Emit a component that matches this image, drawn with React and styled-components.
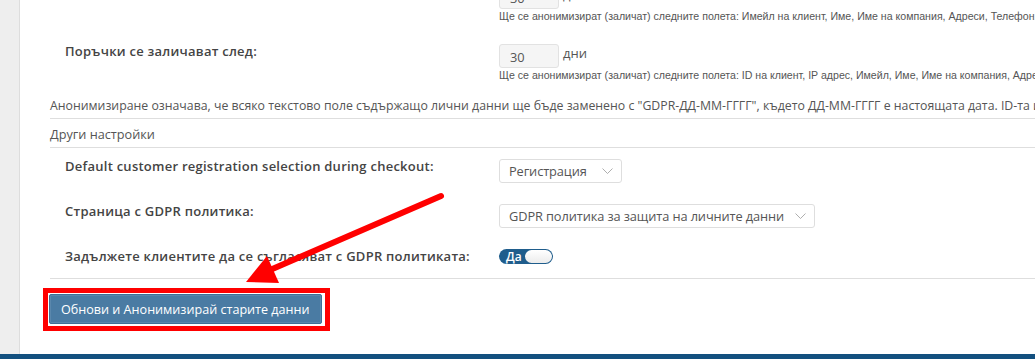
import React from 'react';
import styled, {createGlobalStyle} from 'styled-components';

const GlobalStyle = createGlobalStyle`
  html, body {
    margin: 0;
    padding: 0;
    background: #fff;
  }
  body {
    font-family: "Open Sans", "Noto Sans", sans-serif;
    font-size: 12.7px;
    color: #555;
  }
`;

const Page = styled.div`
  position: relative;
  display: flex;
  flex-direction: column;
  width: 1035px;
  height: 359px;
  overflow: hidden;
`;

const Workspace = styled.div`
  display: flex;
  flex-direction: row;
  height: 354px;
  overflow: hidden;
`;

const Sidebar = styled.div`
  width: 19px;
  flex: none;
  background-color: #eeeeee;
  border-right: 1px solid #dddddd;
`;

const Main = styled.div`
  flex: 1;
  min-width: 0;
  overflow: hidden;
  background-color: #fff;
  padding-left: 30px;
`;

const Scrolled = styled.div`
  margin-top: -15px;
`;

const Row = styled.div`
  display: flex;
  flex-direction: row;
  align-items: flex-start;
  padding: ${props => props.$padding || '0'};
  padding-left: 15px;
  margin-top: ${props => props.$gap || '0'};
`;

const Label = styled.div`
  width: 434px;
  flex: none;
  font-weight: 600;
  font-size: 13px;
  line-height: 14px;
  letter-spacing: 0.25px;
  color: #444;
  white-space: nowrap;
`;

const Field = styled.div`
  display: flex;
  flex-direction: column;
  min-width: 0;
`;

const InputLine = styled.div`
  display: flex;
  flex-direction: row;
  align-items: flex-start;
`;

const NumberInput = styled.div`
  box-sizing: border-box;
  width: 60px;
  height: 24px;
  padding: 0 10px;
  line-height: 24px;
  font-size: 12.8px;
  color: #555;
  background-color: #f5f5f5;
  border: 1px solid #e2e2e2;
  border-radius: 3px;
`;

const Suffix = styled.span`
  margin-left: 4px;
  line-height: 18px;
  font-size: 13px;
  color: #555;
`;

const Help = styled.div`
  margin-top: 1px;
  font-family: "Liberation Sans", Arial, sans-serif;
  font-size: 10.6px;
  line-height: 13px;
  color: #555;
  white-space: nowrap;
`;

const Note = styled.p`
  margin: 15px 0 3px;
  font-size: 12.3px;
  line-height: 18px;
  white-space: nowrap;
`;

const Rule = styled.div`
  height: 1px;
  background-color: #dedede;
`;

const Legend = styled.div`
  padding: 6px 0 4px;
  line-height: 18px;
  color: #555;
`;

const Select = styled.div`
  box-sizing: border-box;
  display: flex;
  flex-direction: row;
  align-items: center;
  justify-content: space-between;
  width: ${props => props.$width}px;
  height: 24px;
  padding: 0 8px 0 9px;
  font-size: 12.8px;
  letter-spacing: -0.1px;
  color: #555;
  background: #fff;
  border: 1px solid #dedede;
  border-radius: 3px;
  white-space: nowrap;
`;

const Chevron = () => (
  <svg width="11" height="6" viewBox="0 0 11 6">
    <path d="M0.5 0.5 L5.5 5.5 L10.5 0.5" fill="none" stroke="#999" strokeWidth="0.8" />
  </svg>
);

const Toggle = styled.div`
  box-sizing: border-box;
  display: flex;
  flex-direction: row;
  align-items: center;
  justify-content: space-between;
  width: 54px;
  height: 15px;
  padding: 0 1px 0 7px;
  background-color: #1f5d8c;
  border-radius: 8px;
`;

const ToggleText = styled.span`
  font-size: 12px;
  font-weight: 600;
  line-height: 15px;
  color: #fff;
`;

const Knob = styled.span`
  width: 27px;
  height: 13px;
  border-radius: 7px;
  background: linear-gradient(#ffffff, #ececec);
`;

const Actions = styled.div`
  padding: 9px 0 0;
  margin-left: -7px;
`;

const Highlight = styled.div`
  display: inline-block;
  padding: 1px 3px 2px 1px;
  border: 5px solid #ff0000;
  background: #fff;
`;

const Button = styled.button`
  display: block;
  height: 30px;
  padding: 0 11px;
  font-family: "Open Sans", "Noto Sans", sans-serif;
  font-size: 12.6px;
  color: #fff;
  background-color: #4a7ba3;
  border: 1px solid #3f6f96;
  border-radius: 2px;
  box-shadow: inset 0 0 0 1px #5a87ac;
`;

const Footer = styled.div`
  height: 5px;
  background-color: #13507f;
`;

const Annotation = styled.svg`
  position: absolute;
  left: 0;
  top: 0;
  pointer-events: none;
`;

const Arrow = () => (
  <Annotation width="1035" height="359" viewBox="0 0 1035 359">
    <line x1="441" y1="196" x2="270" y2="270" stroke="#ff0000" strokeWidth="6" strokeLinecap="round" />
    <polygon points="246,282 267,256 279,283" fill="#ff0000" />
  </Annotation>
);

const App = () => (
  <>
    <GlobalStyle />
    <Page>
      <Workspace>
        <Sidebar />
        <Main>
          <Scrolled>
            <Row>
              <Label>Клиенти без поръчки се заличават след дни неактивност:</Label>
              <Field>
                <InputLine>
                  <NumberInput>30</NumberInput>
                  <Suffix>дни</Suffix>
                </InputLine>
                <Help>Ще се анонимизират (заличат) следните полета: Имейл на клиент, Име, Име на компания, Адреси, Телефон, Дата на раждане</Help>
              </Field>
            </Row>
            <Row $gap="21px">
              <Label>Поръчки се заличават след:</Label>
              <Field>
                <InputLine>
                  <NumberInput>30</NumberInput>
                  <Suffix>дни</Suffix>
                </InputLine>
                <Help>Ще се анонимизират (заличат) следните полета: ID на клиент, IP адрес, Имейл, Име, Име на компания, Адреси, Телефон</Help>
              </Field>
            </Row>
            <Note>Анонимизиране означава, че всяко текстово поле съдържащо лични данни ще бъде заменено с "GDPR-ДД-ММ-ГГГГ", където ДД-ММ-ГГГГ е настоящата дата. ID-та и IP адреси ще бъдат заменени с 0.</Note>
            <Rule />
            <Legend>Други настройки</Legend>
            <Rule />
            <Row $padding="11px 0 10px">
              <Label>Default customer registration selection during checkout:</Label>
              <Select $width={123}>Регистрация<Chevron /></Select>
            </Row>
            <Row $padding="11px 0 10px">
              <Label>Страница с GDPR политика:</Label>
              <Select $width={316}>GDPR политика за защита на личните данни<Chevron /></Select>
            </Row>
            <Row $padding="11px 0 14px">
              <Label>Задължете клиентите да се съгласяват с GDPR политиката:</Label>
              <Toggle>
                <ToggleText>Да</ToggleText>
                <Knob />
              </Toggle>
            </Row>
            <Rule />
            <Actions>
              <Highlight>
                <Button>Обнови и Анонимизирай старите данни</Button>
              </Highlight>
            </Actions>
          </Scrolled>
        </Main>
      </Workspace>
      <Footer />
      <Arrow />
    </Page>
  </>
);

export default App;
